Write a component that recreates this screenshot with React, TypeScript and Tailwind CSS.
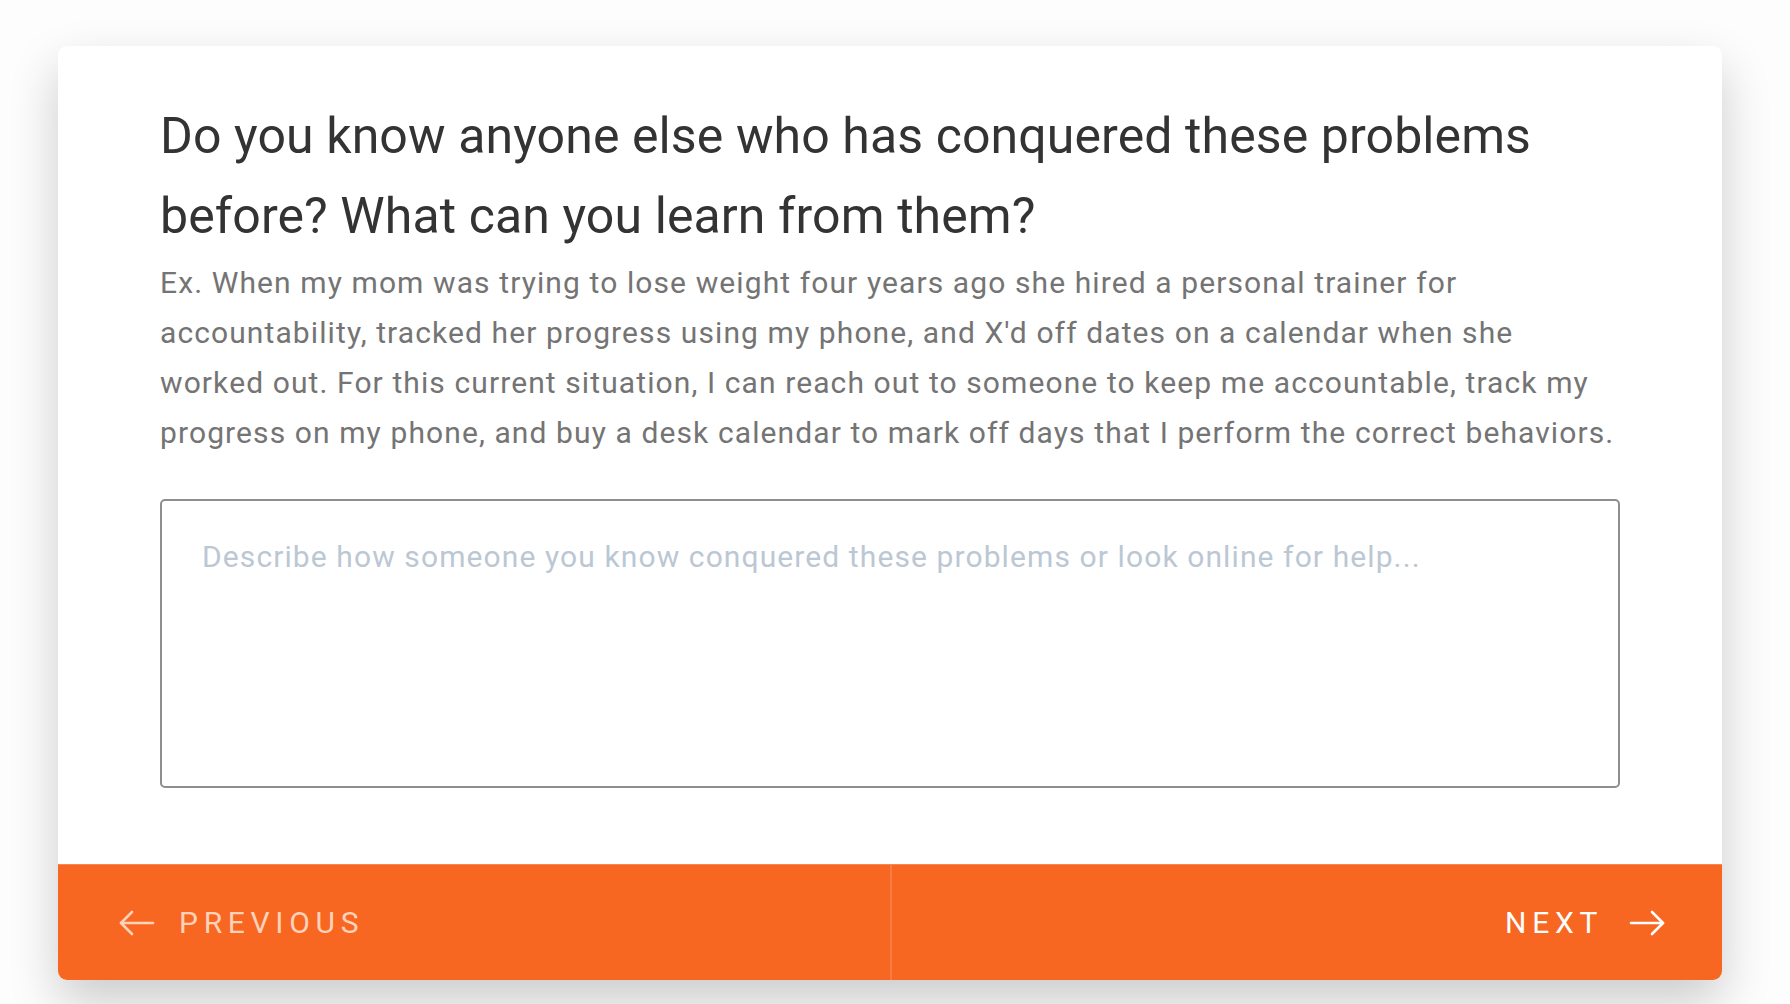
import React from 'react'

const font = { fontFamily: 'Roboto, "Noto Sans", Arial, sans-serif' }

function ArrowLeft() {
  return (
    <svg width="36" height="26" viewBox="0 0 36 26" fill="none" stroke="currentColor" strokeWidth="2.6" strokeLinecap="round" strokeLinejoin="round">
      <path d="M13 2 L2 13 L13 24" />
      <path d="M2 13 H34" />
    </svg>
  )
}

function ArrowRight() {
  return (
    <svg width="36" height="26" viewBox="0 0 36 26" fill="none" stroke="currentColor" strokeWidth="2.6" strokeLinecap="round" strokeLinejoin="round">
      <path d="M23 2 L34 13 L23 24" />
      <path d="M34 13 H2" />
    </svg>
  )
}

export default function App() {
  return (
    <div className="min-h-[1004px] bg-[#fdfdfd] pl-[58px] pr-[68px] pt-[46px]" style={font}>
      <div className="overflow-hidden rounded-[9px] bg-white shadow-[0_22px_50px_rgba(0,0,0,0.2)]">
        <div className="px-[102px] pt-[50px] pb-[76px]">
          <h1 className="text-[50px] leading-[80px] font-normal tracking-[0.1px] text-[#333333]">
            Do you know anyone else who has conquered these problems before? What can you learn from them?
          </h1>
          <p className="mt-[2px] text-[30px] leading-[50px] tracking-[1.1px] text-[#747474]">
            Ex. When my mom was trying to lose weight four years ago she hired a personal trainer for accountability, tracked her progress using my phone, and X'd off dates on a calendar when she worked out. For this current situation, I can reach out to someone to keep me accountable, track my progress on my phone, and buy a desk calendar to mark off days that I perform the correct behaviors.
          </p>
          <textarea
            className="mt-[41px] block h-[289px] w-full resize-none rounded-[5px] border-2 border-[#8e8e8e] px-[40px] pt-[35px] text-[30px] leading-[42px] tracking-[1.1px] text-[#333] outline-none placeholder:text-[#bcc7d4]"
            placeholder="Describe how someone you know conquered these problems or look online for help..."
          />
        </div>
        <div className="grid h-[116px] grid-cols-2 border-t border-[#f98650] bg-[#f76722]">
          <button className="flex items-center gap-[24px] pl-[61px] text-[30px] tracking-[0.19em] text-[#ffd2b9]">
            <ArrowLeft />
            <span>PREVIOUS</span>
          </button>
          <button className="flex items-center justify-end gap-[26px] border-l-2 border-[#f97d40] pr-[57px] text-[30px] tracking-[0.19em] text-white">
            <span>NEXT</span>
            <ArrowRight />
          </button>
        </div>
      </div>
    </div>
  )
}
